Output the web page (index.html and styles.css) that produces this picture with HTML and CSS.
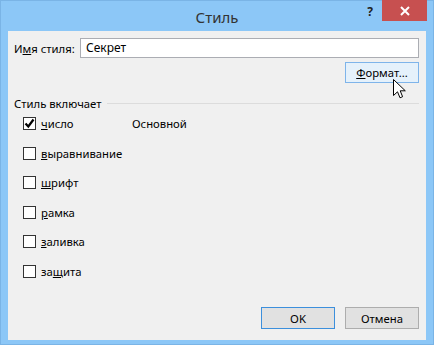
FILE: index.html
```html
<!DOCTYPE html>
<html lang="ru">
<head>
  <meta charset="UTF-8">
  <title>Стиль</title>
  <link rel="stylesheet" href="styles.css">
</head>
<body>
  <div class="window">
    <div class="title-bar">
      <div></div>
      <div class="title">Стиль</div>
      <div class="controls">
        <span class="help">?</span>
        <span class="close">
          <svg width="10" height="10" viewBox="0 0 10 10"><path d="M1 1 L9 9 M9 1 L1 9" stroke="#fff" stroke-width="2"/></svg>
        </span>
      </div>
    </div>

    <div class="client">
      <!-- имя стиля -->
      <div class="name-row">
        <label class="name-label">И<u>м</u>я стиля:</label>
        <div class="text-input">Секрет</div>
      </div>
      <div class="format-row">
        <div class="btn btn-hover"><u>Ф</u>ормат...
          <svg class="cursor" width="14" height="20" viewBox="0 0 14 20"><path d="M0.5 0.5 L0.5 16.5 L4.5 12.8 L7 18.8 L9.6 17.7 L7.2 11.8 L12.3 11.8 Z" fill="#fff" stroke="#000" stroke-width="1"/></svg>
        </div>
      </div>

      <!-- стиль включает -->
      <div class="group-title"><span>Стиль включает</span><div class="group-line"></div></div>
      <div class="checks">
        <div class="check-row"><span class="box checked"><svg width="11" height="11" viewBox="0 0 11 11"><path d="M1.5 5.5 L4.3 8.5 L9.5 1.5" fill="none" stroke="#000" stroke-width="2.2"/></svg></span><span class="check-label"><u>ч</u>исло</span><span class="check-value">Основной</span></div>
        <div class="check-row"><span class="box"></span><span class="check-label"><u>в</u>ыравнивание</span></div>
        <div class="check-row"><span class="box"></span><span class="check-label"><u>ш</u>рифт</span></div>
        <div class="check-row"><span class="box"></span><span class="check-label"><u>р</u>амка</span></div>
        <div class="check-row"><span class="box"></span><span class="check-label"><u>з</u>аливка</span></div>
        <div class="check-row"><span class="box"></span><span class="check-label">за<u>щ</u>ита</span></div>
      </div>

      <div class="footer">
        <div class="btn btn-default">OK</div>
        <div class="btn">Отмена</div>
      </div>
    </div>
  </div>
</body>
</html>
```

FILE: styles.css
```css
/* окно диалога */
body {
  margin: 0;
  font-family: "Noto Sans", "Open Sans", sans-serif;
  font-size: 11.3px;
  color: #000;
}

.window {
  width: 434px;
  height: 345px;
  box-sizing: border-box;
  background-color: #8cc7f7;
  border: 1px solid #7ab4e6;
  display: flex;
  flex-direction: column;
}

/* заголовок */
.title-bar {
  height: 30px;
  display: grid;
  grid-template-columns: 1fr auto 1fr;
  align-items: start;
}

.title {
  font-size: 15px;
  color: #333;
  line-height: 30px;
  padding-top: 1px;
}

.controls {
  display: flex;
  justify-content: flex-end;
  align-items: flex-start;
  margin-top: -1px;
  margin-right: 6px;
}

.help {
  font-weight: bold;
  font-size: 12px;
  color: #222;
  margin-right: 9px;
  line-height: 24px;
}

.close {
  width: 45px;
  height: 21px;
  background-color: #c75050;
  display: flex;
  justify-content: center;
  align-items: center;
}

/* рабочая область */
.client {
  flex: 1;
  margin: 0 7px 4px 7px;
  background-color: #f0f0f0;
  padding: 7px 7px 0 6px;
  display: flex;
  flex-direction: column;
}

.name-row {
  display: flex;
  align-items: center;
}

.name-label {
  width: 66px;
  flex-shrink: 0;
}

.text-input {
  flex: 1;
  height: 20px;
  box-sizing: border-box;
  border: 1px solid #abadb3;
  background: #fff;
  padding: 0 5px;
  line-height: 18px;
  font-size: 12px;
}

.format-row {
  display: flex;
  justify-content: flex-end;
  margin-top: 4px;
}

.btn {
  width: 74px;
  height: 22px;
  box-sizing: border-box;
  border: 1px solid #adadad;
  background-color: #e1e1e1;
  display: flex;
  justify-content: center;
  align-items: center;
}

.btn-hover {
  position: relative;
  height: 21px;
  background-color: #e5f1fb;
  border-color: #7eb4ea;
}

.cursor {
  position: absolute;
  left: 47px;
  top: 16px;
}

.btn-default {
  border-color: #3c8fdc;
}

/* группа флажков */
.group-title {
  display: flex;
  align-items: center;
  margin-top: 12px;
  height: 16px;
}

.group-line {
  flex: 1;
  border-top: 1px solid #dcdcdc;
  margin-left: 6px;
}

.checks {
  padding-left: 9px;
  margin-top: -2px;
}

.check-row {
  height: 29.5px;
  display: flex;
  align-items: center;
}

.box {
  width: 13px;
  height: 13px;
  box-sizing: border-box;
  border: 1px solid #333;
  background: #fff;
  display: flex;
  justify-content: center;
  align-items: center;
}

.check-label {
  margin-left: 5px;
  width: 91px;
}

.footer {
  display: flex;
  justify-content: flex-end;
  gap: 10px;
  margin-top: 21px;
}
```
